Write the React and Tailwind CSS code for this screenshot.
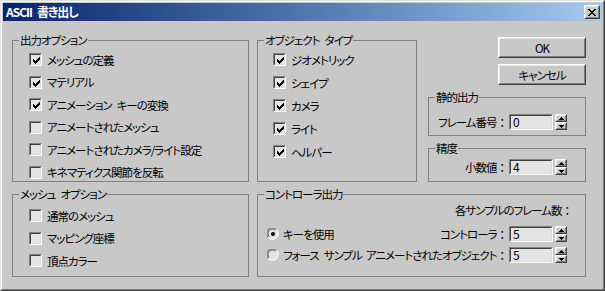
import React from "react";

const CHECK = "M6 0h1v1h-1z M5 1h2v1h-2z M0 2h1v1h-1z M4 2h3v1h-3z M0 3h2v1h-2z M3 3h3v1h-3z M0 4h5v1h-5z M1 5h3v1h-3z M2 6h1v1h-1z";
const XMARK = "M0 0h2v1h-2z M6 0h2v1h-2z M1 1h2v1h-2z M5 1h2v1h-2z M2 2h4v1h-4z M3 3h2v1h-2z M2 4h4v1h-4z M1 5h2v1h-2z M5 5h2v1h-2z M0 6h2v1h-2z M6 6h2v1h-2z";

function T({ s }) {
  const parts = s.split(" ");
  return (
    <>
      {parts.map((p, i) => (
        <React.Fragment key={i}>
          {i > 0 && <span className="inline-block w-[5px]" />}
          {p}
        </React.Fragment>
      ))}
    </>
  );
}

function Sunken({ className, children }) {
  return (
    <div className={`border border-t-[#808080] border-l-[#808080] border-r-white border-b-white ${className}`}>
      <div className="w-full h-full border border-t-[#404040] border-l-[#404040] border-r-[#dcdcdc] border-b-[#dcdcdc] bg-[#e4e4e4]">
        {children}
      </div>
    </div>
  );
}

function Raised({ className, children, innerClass }) {
  return (
    <div className={`border border-t-white border-l-white border-r-[#404040] border-b-[#404040] ${className}`}>
      <div className={`w-full h-full border border-t-[#e8e8e8] border-l-[#e8e8e8] border-r-[#808080] border-b-[#808080] bg-[#c8c8c8] ${innerClass}`}>
        {children}
      </div>
    </div>
  );
}

function Colon() {
  return <span className="[font-feature-settings:normal] tracking-normal">：</span>;
}

function Check({ checked, label }) {
  return (
    <div className="flex items-center h-[13px] gap-[5px]">
      <Sunken className="w-[13px] h-[13px] shrink-0">
        {checked && (
          <svg width="7" height="7" viewBox="0 0 7 7" className="ml-[2px] mt-[2px]" shapeRendering="crispEdges">
            <path d={CHECK} fill="#000" />
          </svg>
        )}
      </Sunken>
      <span className="leading-[14px] whitespace-nowrap">
        <T s={label} />
      </span>
    </div>
  );
}

function Radio({ checked, label }) {
  return (
    <div className="flex items-center gap-[4px] shrink-0">
      <svg width="12" height="12" viewBox="0 0 12 12" className="shrink-0">
        <circle cx="6" cy="6" r="5.5" fill="#e4e4e4" />
        <path d="M1.2 9.5 A5.5 5.5 0 0 1 9.5 1.2" fill="none" stroke="#808080" strokeWidth="1" />
        <path d="M2.2 8.6 A4.3 4.3 0 0 1 8.6 2.2" fill="none" stroke="#404040" strokeWidth="1" />
        <path d="M9.5 1.2 A5.5 5.5 0 0 1 1.2 9.5" fill="none" stroke="#ffffff" strokeWidth="1" />
        {checked && <circle cx="6" cy="6" r="2" fill="#000" />}
      </svg>
      <span className="leading-[14px] whitespace-nowrap">
        <T s={label} />
      </span>
    </div>
  );
}

function Spinner() {
  return (
    <div className="flex flex-col w-[12px] h-[16px] ml-[2px] shrink-0">
      <Raised className="h-[8px] w-[12px]" innerClass="flex items-center justify-center">
        <svg width="5" height="3" viewBox="0 0 5 3" shapeRendering="crispEdges">
          <path d="M2 0h1v1h-1z M1 1h3v1h-3z M0 2h5v1h-5z" fill="#000" />
        </svg>
      </Raised>
      <Raised className="h-[8px] w-[12px]" innerClass="flex items-center justify-center">
        <svg width="5" height="3" viewBox="0 0 5 3" shapeRendering="crispEdges">
          <path d="M0 0h5v1h-5z M1 1h3v1h-3z M2 2h1v1h-1z" fill="#000" />
        </svg>
      </Raised>
    </div>
  );
}

function NumField({ label, value }) {
  return (
    <div className="flex items-center h-[16px] shrink-0">
      <span className="leading-[14px] whitespace-nowrap mr-[1px]">
        {label}
        <Colon />
      </span>
      <Sunken className="w-[44px] h-[16px] shrink-0">
        <div className="pl-[2px] leading-[12px] text-[12px]">{value}</div>
      </Sunken>
      <Spinner />
    </div>
  );
}

function Group({ label, className, children }) {
  return (
    <div className={`relative border border-[#808080] ${className}`}>
      <span className="absolute left-[6px] top-[-8px] px-[1px] bg-[#c8c8c8] leading-[14px] whitespace-nowrap">
        <T s={label} />
      </span>
      {children}
    </div>
  );
}

export default function App() {
  return (
    <div className="w-[605px] h-[291px] border border-t-[#dfdfdf] border-l-[#dfdfdf] border-r-[#404040] border-b-[#404040] bg-[#c8c8c8] text-[11.5px] tracking-[-1px] text-black font-['Noto_Sans_CJK_JP','Noto_Sans',sans-serif] [font-feature-settings:'palt']">
      <div className="h-full border border-t-white border-l-white border-r-[#808080] border-b-[#808080] p-[1px] flex flex-col">
        <div className="h-[18px] flex items-center justify-between bg-gradient-to-r from-[#0a246a] to-[#a6caf0] pl-[3px] pr-[2px] shrink-0">
          <span className="text-white font-bold text-[12px] leading-[14px]">
            ASCII<span className="inline-block w-[5px]" />書き出し
          </span>
          <Raised className="w-[16px] h-[14px]" innerClass="flex items-center justify-center">
            <svg width="8" height="7" viewBox="0 0 8 7" shapeRendering="crispEdges">
              <path d={XMARK} fill="#000" />
            </svg>
          </Raised>
        </div>

        <div className="pl-[9px] pt-[16px]">
          <div className="flex items-start">
            <Group label="出力オプション" className="mt-[3px] w-[237px] h-[142px]">
              <div className="flex flex-col gap-[9.5px] pt-[12px] pl-[16px]">
                <Check checked label="メッシュの定義" />
                <Check checked label="マテリアル" />
                <Check checked label="アニメーション キーの変換" />
                <Check label="アニメートされたメッシュ" />
                <Check label="アニメートされたカメラ/ライト設定" />
                <Check label="キネマティクス関節を反転" />
              </div>
            </Group>

            <Group label="オブジェクト タイプ" className="mt-[3px] ml-[8px] w-[160px] h-[142px]">
              <div className="flex flex-col gap-[10px] pt-[12px] pl-[15px]">
                <Check checked label="ジオメトリック" />
                <Check checked label="シェイプ" />
                <Check checked label="カメラ" />
                <Check checked label="ライト" />
                <Check checked label="ヘルパー" />
              </div>
            </Group>

            <div className="ml-[11px] w-[158px] flex flex-col items-end">
              <Raised className="w-[88px] h-[21px]" innerClass="flex items-center justify-center">
                <span className="leading-[14px]">OK</span>
              </Raised>
              <Raised className="w-[88px] h-[21px] mt-[6px]" innerClass="flex items-center justify-center">
                <span className="leading-[14px]">キャンセル</span>
              </Raised>
              <Group label="静的出力" className="self-stretch mt-[12px] h-[39px]">
                <div className="flex justify-end pt-[16px] pr-[18px]">
                  <NumField label="フレーム番号" value="0" />
                </div>
              </Group>
              <Group label="精度" className="self-stretch mt-[12px] h-[34px]">
                <div className="flex justify-end pt-[10px] pr-[18px]">
                  <NumField label="小数値" value="4" />
                </div>
              </Group>
            </div>
          </div>

          <div className="flex mt-[12px]">
            <Group label="メッシュ オプション" className="w-[237px] h-[83px]">
              <div className="flex flex-col gap-[9.5px] pt-[14px] pl-[16px]">
                <Check label="通常のメッシュ" />
                <Check label="マッピング座標" />
                <Check label="頂点カラー" />
              </div>
            </Group>

            <Group label="コントローラ出力" className="ml-[8px] w-[329px] h-[83px]">
              <div className="pt-[8px] pr-[12px] flex justify-end">
                <span className="leading-[14px]">
                  各サンプルのフレーム数
                  <Colon />
                </span>
              </div>
              <div className="mt-[9px] h-[16px] flex items-center justify-between pl-[9px] pr-[18px]">
                <Radio checked label="キーを使用" />
                <NumField label="コントローラ" value="5" />
              </div>
              <div className="mt-[5px] h-[16px] flex items-center justify-between pl-[9px] pr-[18px]">
                <Radio label="フォース サンプル" />
                <NumField label="アニメートされたオブジェクト" value="5" />
              </div>
            </Group>
          </div>
        </div>
      </div>
    </div>
  );
}
